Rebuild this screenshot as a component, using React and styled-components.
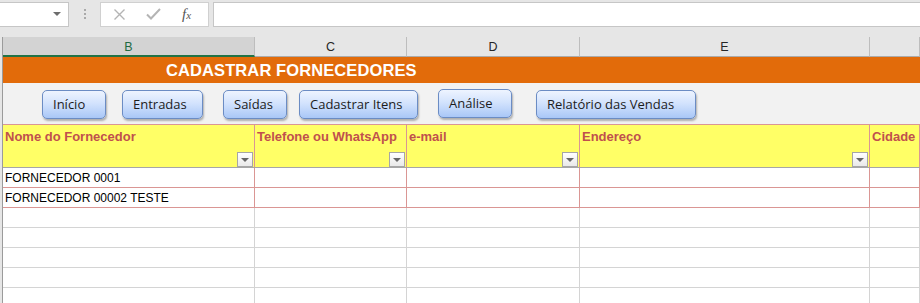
import React from 'react'
import styled, { createGlobalStyle } from 'styled-components'

const Global = createGlobalStyle`
  html, body {
    margin: 0;
    padding: 0;
    background: #e6e6e6;
    font-family: 'Liberation Sans', Arial, sans-serif;
    overflow: hidden;
  }
`

const COLS = '252px 152px 173px 290px 1fr'

const Window = styled.div`
  width: 920px;
  height: 303px;
  background: #e6e6e6;
  overflow: hidden;
`

const FormulaBar = styled.div`
  display: flex;
  align-items: center;
  height: 27px;
  padding-top: 1px;
  box-sizing: border-box;
`

const NameBox = styled.div`
  width: 69px;
  height: 25px;
  box-sizing: border-box;
  background: #fff;
  border: 1px solid #c6c6c6;
  border-left: 0;
  display: flex;
  align-items: center;
  justify-content: flex-end;
  padding-right: 7px;
`

const Caret = styled.span`
  width: 0;
  height: 0;
  border-left: 4px solid transparent;
  border-right: 4px solid transparent;
  border-top: 4px solid ${p => p.color || '#6d6d6d'};
`

const Grip = styled.div`
  width: 31px;
  display: flex;
  flex-direction: column;
  align-items: center;
  gap: 2px;
  span {
    width: 2px;
    height: 2px;
    background: #a9a9a9;
  }
`

const FxBox = styled.div`
  width: 109px;
  height: 25px;
  box-sizing: border-box;
  background: #fff;
  border: 1px solid #d0d0d0;
  display: flex;
  align-items: center;
  padding-left: 12px;
  gap: 20px;
`

const FxLabel = styled.span`
  font-family: 'Liberation Serif', 'DejaVu Serif', serif;
  font-style: italic;
  font-size: 15px;
  color: #555;
  margin-left: 1px;
  span {
    font-size: 11px;
  }
`

const FormulaInput = styled.div`
  flex: 1;
  margin-left: 4px;
  height: 25px;
  box-sizing: border-box;
  background: #fff;
  border: 1px solid #c6c6c6;
  border-right: 0;
`

const HeaderStrip = styled.div`
  margin-top: 10px;
  display: grid;
  grid-template-columns: ${COLS};
  height: 20px;
  border-left: 1px solid #9b9b9b;
  margin-left: 2px;
`

const ColHead = styled.div`
  display: flex;
  align-items: center;
  justify-content: center;
  font-family: 'Liberation Sans', Arial, sans-serif;
  font-size: 12.5px;
  color: ${p => (p.$active ? '#1e6b43' : '#262626')};
  background: ${p => (p.$active ? '#d3d3d3' : '#e6e6e6')};
  box-sizing: border-box;
  border-bottom: ${p => (p.$active ? '2px solid #217346' : '1px solid #ababab')};
  border-right: 1px solid #bdbdbd;
  padding-top: 1px;
`

const Sheet = styled.div`
  margin-left: 2px;
  border-left: 1px solid #9b9b9b;
  background: #fff;
  display: flex;
  flex-direction: column;
`

const TitleBar = styled.div`
  height: 26px;
  background: #e26b0a;
  color: #fff;
  font-weight: bold;
  font-size: 16.5px;
  display: flex;
  align-items: center;
  padding-left: 163px;
  letter-spacing: 0.1px;
`

const ButtonRow = styled.div`
  height: 41px;
  background: #f2f2f2;
  display: flex;
  align-items: flex-start;
  padding-left: 39px;
  padding-top: 6px;
  box-sizing: border-box;
`

const NavButton = styled.button`
  all: unset;
  box-sizing: border-box;
  width: ${p => p.$w}px;
  height: 29px;
  margin-left: ${p => p.$gap}px;
  margin-top: ${p => (p.$up ? 0 : 1)}px;
  border: 1px solid #6b8cc4;
  border-radius: 5px;
  background: linear-gradient(to bottom, #eef4ff 0%, #d3e3fd 45%, #a9c7f7 100%);
  box-shadow: 1px 2px 2px rgba(0, 0, 0, 0.28);
  font-family: 'Open Sans', 'Liberation Sans', sans-serif;
  font-size: 13px;
  color: #1c1c1c;
  display: flex;
  align-items: center;
  padding-left: 10px;
  padding-bottom: 1px;
`

const Row = styled.div`
  display: grid;
  grid-template-columns: ${COLS};
  height: ${p => p.$h || 20}px;
  box-sizing: border-box;
  border-top: ${p => (p.$top ? '1px solid #da9694' : '0')};
  border-bottom: 1px solid ${p => p.$line || '#d4d4d4'};
`

const HeadCell = styled.div`
  position: relative;
  background: #ffff66;
  border-right: 1px solid #da9694;
  color: #c0504d;
  font-weight: bold;
  font-size: 13px;
  padding: 4px 0 0 2px;
  white-space: nowrap;
  overflow: hidden;
`

const FilterBtn = styled.span`
  position: absolute;
  right: 1px;
  bottom: 0;
  width: 16px;
  height: 15px;
  box-sizing: border-box;
  border: 1px solid #a6a6a6;
  background: linear-gradient(to bottom, #ffffff, #e9e9e9);
  display: flex;
  align-items: center;
  justify-content: center;
`

const Cell = styled.div`
  border-right: 1px solid ${p => p.$line || '#d4d4d4'};
  font-size: 12px;
  color: #000;
  padding-left: 2px;
  padding-top: 1px;
  display: flex;
  align-items: center;
  white-space: nowrap;
  overflow: hidden;
`

const columns = ['B', 'C', 'D', 'E', '']

const buttons = [
  { label: 'Início', w: 64, gap: 0 },
  { label: 'Entradas', w: 81, gap: 16 },
  { label: 'Saídas', w: 64, gap: 20 },
  { label: 'Cadastrar Itens', w: 119, gap: 12 },
  { label: 'Análise', w: 74, gap: 20, up: true },
  { label: 'Relatório das Vendas', w: 160, gap: 24 },
]

const heads = [
  { label: 'Nome do Fornecedor', filter: true },
  { label: 'Telefone ou WhatsApp', filter: true },
  { label: 'e-mail', filter: true },
  { label: 'Endereço', filter: true },
  { label: 'Cidade' },
]

const data = [
  ['FORNECEDOR 0001', '', '', '', ''],
  ['FORNECEDOR 00002 TESTE', '', '', '', ''],
]

export default function App () {
  return (
    <Window>
      <Global />
      <FormulaBar>
        <NameBox>
          <Caret />
        </NameBox>
        <Grip>
          <span />
          <span />
          <span />
        </Grip>
        <FxBox>
          <svg width="13" height="13" viewBox="0 0 13 13">
            <path d="M1.5 1.5 L11.5 11.5 M11.5 1.5 L1.5 11.5" stroke="#b4b4b4" strokeWidth="1.4" fill="none" />
          </svg>
          <svg width="15" height="12" viewBox="0 0 15 12">
            <path d="M1 6.5 L5 10.5 L14 1" stroke="#b4b4b4" strokeWidth="2" fill="none" />
          </svg>
          <FxLabel>f<span>x</span></FxLabel>
        </FxBox>
        <FormulaInput />
      </FormulaBar>

      <HeaderStrip>
        {columns.map((c, i) => (
          <ColHead key={i} $active={c === 'B'}>{c}</ColHead>
        ))}
      </HeaderStrip>

      <Sheet>
        <TitleBar>CADASTRAR FORNECEDORES</TitleBar>
        <ButtonRow>
          {buttons.map(b => (
            <NavButton key={b.label} $w={b.w} $gap={b.gap} $up={b.up}>
              {b.label}
            </NavButton>
          ))}
        </ButtonRow>
        <Row $h={44} $top $line="#a6a6a6">
          {heads.map(h => (
            <HeadCell key={h.label}>
              {h.label}
              {h.filter && (
                <FilterBtn>
                  <Caret color="#666" />
                </FilterBtn>
              )}
            </HeadCell>
          ))}
        </Row>
        {data.map((r, i) => (
          <Row key={i} $line="#da9694">
            {r.map((v, j) => (
              <Cell key={j} $line="#da9694">{v}</Cell>
            ))}
          </Row>
        ))}
        {[0, 1, 2, 3, 4].map(i => (
          <Row key={'e' + i}>
            {columns.map((c, j) => (
              <Cell key={j} />
            ))}
          </Row>
        ))}
      </Sheet>
    </Window>
  )
}
